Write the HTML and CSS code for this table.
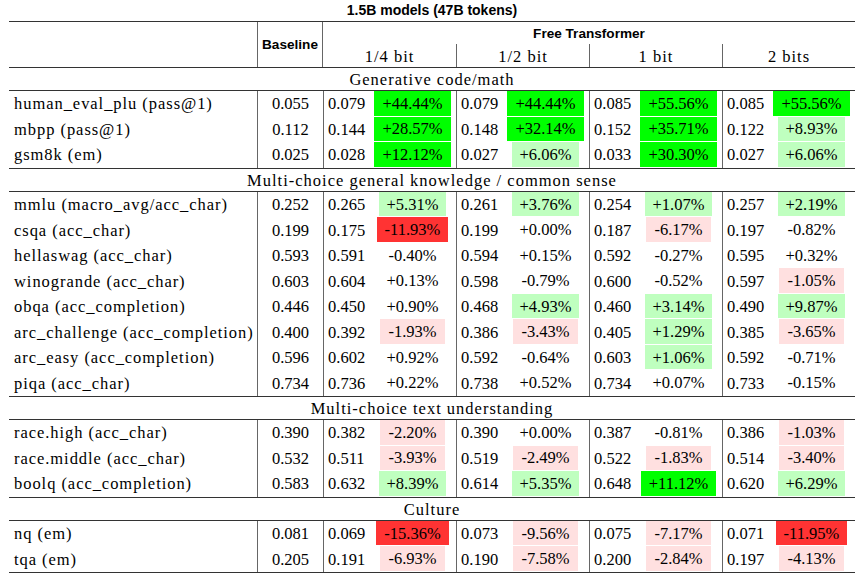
FILE: index.html
```html
<!DOCTYPE html>
<html>
<head>
<meta charset="utf-8">
<link rel="stylesheet" href="styles.css">
</head>
<body>
<div class="page">
  <div class="title">1.5B models (47B tokens)</div>
  <div class="table">
    <div class="head">
      <div class="h-label"></div>
      <div class="h-base">Baseline</div>
      <div class="h-ft">Free Transformer</div>
      <div class="h-bit">1/4 bit</div>
      <div class="h-bit sep">1/2 bit</div>
      <div class="h-bit sep">1 bit</div>
      <div class="h-bit sep">2 bits</div>
    </div>

    <div class="section">Generative code/math</div>
    <div class="row"><div class="label">human_eval_plu (pass@1)</div><div class="base">0.055</div><div class="val">0.079</div><div class="delta"><span class="hl g">+44.44%</span></div><div class="val">0.079</div><div class="delta"><span class="hl g">+44.44%</span></div><div class="val">0.085</div><div class="delta"><span class="hl g">+55.56%</span></div><div class="val">0.085</div><div class="delta"><span class="hl g">+55.56%</span></div></div>
    <div class="row"><div class="label">mbpp (pass@1)</div><div class="base">0.112</div><div class="val">0.144</div><div class="delta"><span class="hl g">+28.57%</span></div><div class="val">0.148</div><div class="delta"><span class="hl g">+32.14%</span></div><div class="val">0.152</div><div class="delta"><span class="hl g">+35.71%</span></div><div class="val">0.122</div><div class="delta"><span class="hl lg">+8.93%</span></div></div>
    <div class="row"><div class="label">gsm8k (em)</div><div class="base">0.025</div><div class="val">0.028</div><div class="delta"><span class="hl g">+12.12%</span></div><div class="val">0.027</div><div class="delta"><span class="hl lg">+6.06%</span></div><div class="val">0.033</div><div class="delta"><span class="hl g">+30.30%</span></div><div class="val">0.027</div><div class="delta"><span class="hl lg">+6.06%</span></div></div>

    <div class="section mid">Multi-choice general knowledge / common sense</div>
    <div class="row"><div class="label">mmlu (macro_avg/acc_char)</div><div class="base">0.252</div><div class="val">0.265</div><div class="delta"><span class="hl lg">+5.31%</span></div><div class="val">0.261</div><div class="delta"><span class="hl lg">+3.76%</span></div><div class="val">0.254</div><div class="delta"><span class="hl lg">+1.07%</span></div><div class="val">0.257</div><div class="delta"><span class="hl lg">+2.19%</span></div></div>
    <div class="row"><div class="label">csqa (acc_char)</div><div class="base">0.199</div><div class="val">0.175</div><div class="delta"><span class="hl r">-11.93%</span></div><div class="val">0.199</div><div class="delta"><span class="hl">+0.00%</span></div><div class="val">0.187</div><div class="delta"><span class="hl p">-6.17%</span></div><div class="val">0.197</div><div class="delta"><span class="hl">-0.82%</span></div></div>
    <div class="row"><div class="label">hellaswag (acc_char)</div><div class="base">0.593</div><div class="val">0.591</div><div class="delta"><span class="hl">-0.40%</span></div><div class="val">0.594</div><div class="delta"><span class="hl">+0.15%</span></div><div class="val">0.592</div><div class="delta"><span class="hl">-0.27%</span></div><div class="val">0.595</div><div class="delta"><span class="hl">+0.32%</span></div></div>
    <div class="row"><div class="label">winogrande (acc_char)</div><div class="base">0.603</div><div class="val">0.604</div><div class="delta"><span class="hl">+0.13%</span></div><div class="val">0.598</div><div class="delta"><span class="hl">-0.79%</span></div><div class="val">0.600</div><div class="delta"><span class="hl">-0.52%</span></div><div class="val">0.597</div><div class="delta"><span class="hl p">-1.05%</span></div></div>
    <div class="row"><div class="label">obqa (acc_completion)</div><div class="base">0.446</div><div class="val">0.450</div><div class="delta"><span class="hl">+0.90%</span></div><div class="val">0.468</div><div class="delta"><span class="hl lg">+4.93%</span></div><div class="val">0.460</div><div class="delta"><span class="hl lg">+3.14%</span></div><div class="val">0.490</div><div class="delta"><span class="hl lg">+9.87%</span></div></div>
    <div class="row"><div class="label">arc_challenge (acc_completion)</div><div class="base">0.400</div><div class="val">0.392</div><div class="delta"><span class="hl p">-1.93%</span></div><div class="val">0.386</div><div class="delta"><span class="hl p">-3.43%</span></div><div class="val">0.405</div><div class="delta"><span class="hl lg">+1.29%</span></div><div class="val">0.385</div><div class="delta"><span class="hl p">-3.65%</span></div></div>
    <div class="row"><div class="label">arc_easy (acc_completion)</div><div class="base">0.596</div><div class="val">0.602</div><div class="delta"><span class="hl">+0.92%</span></div><div class="val">0.592</div><div class="delta"><span class="hl">-0.64%</span></div><div class="val">0.603</div><div class="delta"><span class="hl lg">+1.06%</span></div><div class="val">0.592</div><div class="delta"><span class="hl">-0.71%</span></div></div>
    <div class="row"><div class="label">piqa (acc_char)</div><div class="base">0.734</div><div class="val">0.736</div><div class="delta"><span class="hl">+0.22%</span></div><div class="val">0.738</div><div class="delta"><span class="hl">+0.52%</span></div><div class="val">0.734</div><div class="delta"><span class="hl">+0.07%</span></div><div class="val">0.733</div><div class="delta"><span class="hl">-0.15%</span></div></div>

    <div class="section mid">Multi-choice text understanding</div>
    <div class="row"><div class="label">race.high (acc_char)</div><div class="base">0.390</div><div class="val">0.382</div><div class="delta"><span class="hl p">-2.20%</span></div><div class="val">0.390</div><div class="delta"><span class="hl">+0.00%</span></div><div class="val">0.387</div><div class="delta"><span class="hl">-0.81%</span></div><div class="val">0.386</div><div class="delta"><span class="hl p">-1.03%</span></div></div>
    <div class="row"><div class="label">race.middle (acc_char)</div><div class="base">0.532</div><div class="val">0.511</div><div class="delta"><span class="hl p">-3.93%</span></div><div class="val">0.519</div><div class="delta"><span class="hl p">-2.49%</span></div><div class="val">0.522</div><div class="delta"><span class="hl p">-1.83%</span></div><div class="val">0.514</div><div class="delta"><span class="hl p">-3.40%</span></div></div>
    <div class="row"><div class="label">boolq (acc_completion)</div><div class="base">0.583</div><div class="val">0.632</div><div class="delta"><span class="hl lg">+8.39%</span></div><div class="val">0.614</div><div class="delta"><span class="hl lg">+5.35%</span></div><div class="val">0.648</div><div class="delta"><span class="hl g">+11.12%</span></div><div class="val">0.620</div><div class="delta"><span class="hl lg">+6.29%</span></div></div>

    <div class="section mid">Culture</div>
    <div class="row"><div class="label">nq (em)</div><div class="base">0.081</div><div class="val">0.069</div><div class="delta"><span class="hl r">-15.36%</span></div><div class="val">0.073</div><div class="delta"><span class="hl p">-9.56%</span></div><div class="val">0.075</div><div class="delta"><span class="hl p">-7.17%</span></div><div class="val">0.071</div><div class="delta"><span class="hl r">-11.95%</span></div></div>
    <div class="row"><div class="label">tqa (em)</div><div class="base">0.205</div><div class="val">0.191</div><div class="delta"><span class="hl p">-6.93%</span></div><div class="val">0.190</div><div class="delta"><span class="hl p">-7.58%</span></div><div class="val">0.200</div><div class="delta"><span class="hl p">-2.84%</span></div><div class="val">0.197</div><div class="delta"><span class="hl p">-4.13%</span></div></div>
  </div>
</div>
</body>
</html>
```

FILE: styles.css
```css
* { box-sizing: border-box; }

body {
  margin: 0;
  background: #fff;
  color: #000;
  font-family: "Liberation Serif", "Times New Roman", serif;
  font-size: 16.5px;
}

.page {
  width: 866px;
  padding: 0 11px 0 9px;
}

.title {
  height: 21px;
  line-height: 21px;
  text-align: center;
  font-family: "Liberation Sans", Arial, sans-serif;
  font-weight: bold;
  font-size: 14px;
}

.table {
  width: 846px;
  border-top: 1px solid #333;
  border-bottom: 1px solid #333;
}

.head {
  display: grid;
  grid-template-columns: 248px 66px repeat(4, 133px);
  grid-template-rows: 22px 23px;
  border-bottom: 1px solid #333;
}

.h-label {
  grid-column: 1;
  grid-row: 1 / 3;
}

.h-base {
  grid-column: 2;
  grid-row: 1 / 3;
  border-left: 1px solid #666;
  border-right: 1px solid #666;
  display: flex;
  align-items: center;
  justify-content: center;
  font-family: "Liberation Sans", Arial, sans-serif;
  font-weight: bold;
  font-size: 13.6px;
}

.h-ft {
  grid-column: 3 / 7;
  grid-row: 1;
  display: flex;
  align-items: center;
  justify-content: center;
  font-family: "Liberation Sans", Arial, sans-serif;
  font-weight: bold;
  font-size: 13.6px;
}

.h-bit {
  grid-row: 2;
  display: flex;
  align-items: center;
  justify-content: center;
  padding-top: 3px;
  letter-spacing: 1px;
}

.h-bit.sep {
  border-left: 1px solid #666;
}

.section {
  height: 23px;
  padding-top: 1px;
  line-height: 22px;
  text-align: center;
  letter-spacing: 1px;
  border-bottom: 1px solid #333;
}

.section.mid {
  border-top: 1px solid #333;
  height: 24.3px;
}

.row {
  display: grid;
  grid-template-columns: 248px 66px 51px 82px 51px 82px 51px 82px 51px 82px;
  height: 25.5px;
}

.row > div {
  display: flex;
  align-items: center;
  white-space: nowrap;
  padding-top: 1px;
}

.label {
  padding-left: 5px;
  letter-spacing: 0.95px;
}

.base {
  justify-content: center;
  border-left: 1px solid #666;
}

.val {
  padding-left: 4px;
  border-left: 1px solid #666;
}

.row > .delta {
  justify-content: center;
  align-items: stretch;
  padding-top: 0;
  padding-right: 5px;
}

.hl {
  display: flex;
  align-items: center;
  padding: 1px 8px 0;
  margin-bottom: 1px;
}

.g { background: #00ff00; }
.lg { background: #bfffbf; }
.r { background: #ff3333; }
.p { background: #ffe0e0; }
```
